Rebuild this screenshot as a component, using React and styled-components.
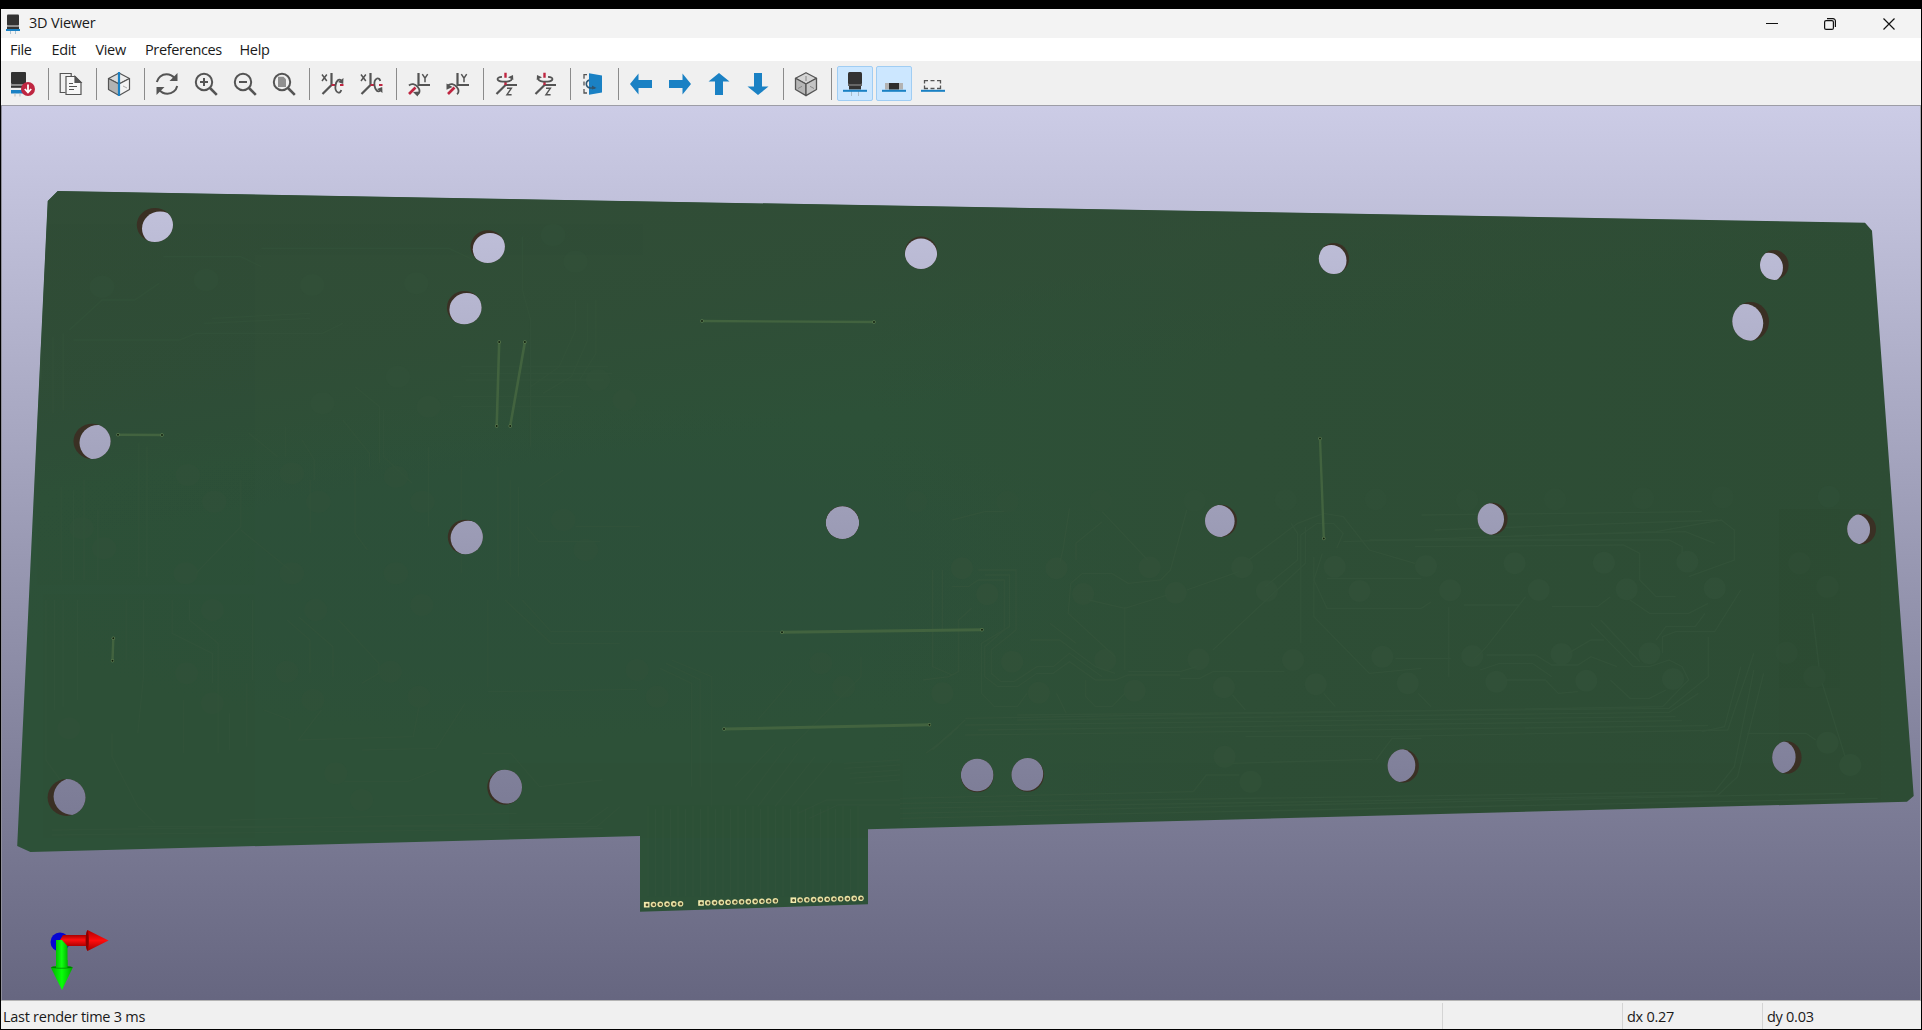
import React from 'react';
import styled, { createGlobalStyle } from 'styled-components';

const GlobalStyle = createGlobalStyle`
  * { box-sizing: border-box; }
  html, body { margin: 0; padding: 0; background: #000; overflow: hidden; }
`;

const Desktop = styled.div`
  width: 1922px;
  height: 1030px;
  padding: 9px 1px 1px 1px;
  background: #000;
  display: flex;
  flex-direction: column;
  font-family: "Open Sans", "Noto Sans", sans-serif;
  font-size: 14.5px;
  color: #1a1a1a;
`;

const Window = styled.div`
  flex: 1;
  display: flex;
  flex-direction: column;
  min-height: 0;
  background: #f0f0f0;
`;

const TitleBar = styled.header`
  height: 29px;
  flex: none;
  display: flex;
  align-items: center;
  background: #f3f3f3;
  padding-left: 5px;
`;

const Title = styled.span`
  margin-left: 9px;
  flex: 1;
  letter-spacing: -0.2px;
  line-height: 20px;
  padding-bottom: 2px;
`;

const WindowButton = styled.button`
  width: 58.5px;
  height: 29px;
  border: 0;
  padding: 0;
  background: transparent;
  display: flex;
  align-items: center;
  justify-content: center;
  & svg { display: block; }
`;

const WindowControls = styled.div`
  display: flex;
  margin-right: 3px;
`;

const MenuBar = styled.nav`
  height: 23px;
  flex: none;
  display: flex;
  align-items: center;
  background: #fff;
  padding: 0 0 0 9px;
`;

const MenuItem = styled.span`
  width: ${(p) => p.$width}px;
  line-height: 20px;
  letter-spacing: -0.35px;
  white-space: nowrap;
`;

const ToolBar = styled.div`
  height: 44px;
  flex: none;
  display: flex;
  align-items: center;
  padding: 1px 0 0 2px;
  background: #f0f0f0;
`;

const ToolButton = styled.button`
  width: 36px;
  height: 35px;
  margin: 0 1px 0 2px;
  padding: 0;
  flex: none;
  display: flex;
  align-items: center;
  justify-content: center;
  border: 1px solid ${(p) => (p.$active ? '#a0cdf3' : 'transparent')};
  border-radius: 2px;
  background: ${(p) => (p.$active ? '#cce7ff' : 'transparent')};
  & svg { display: block; overflow: visible; }
`;

const Separator = styled.span`
  width: 1px;
  height: 32px;
  flex: none;
  margin: 0 ${(p) => (p.$wide ? 3 : 2)}px 0 6px;
  background: #8b8b8b;
`;

const Canvas = styled.main`
  flex: 1;
  min-height: 0;
  border-top: 1px solid #9d9da6;
  border-left: 1px solid #8f8f9b;
  border-right: 1px solid #a6a6ac;
  overflow: hidden;
  & svg { display: block; }
`;

const StatusBar = styled.footer`
  height: 29px;
  flex: none;
  border-top: 1px solid #b4b4b4;
  display: flex;
  align-items: stretch;
  padding-top: 2px;
  background: #f0f0f0;
`;

const StatusField = styled.div`
  width: ${(p) => (p.$width ? `${p.$width}px` : 'auto')};
  flex: ${(p) => (p.$width ? 'none' : 1)};
  padding-left: ${(p) => (p.$width ? 4 : 2)}px;
  border-left: ${(p) => (p.$width ? '1px solid #d4d4d4' : '0')};
  display: flex;
  align-items: center;
  letter-spacing: -0.27px;
  white-space: nowrap;
`;

/* ---------- icons ---------- */

const GREY = '#545454';
const BLUE = '#1a81c4';
const RED = '#bf2641';

const Icon = ({ children, ...rest }) => (
  <svg width="24" height="24" viewBox="0 0 24 24" fill="none" {...rest}>{children}</svg>
);

const AppIcon = () => (
  <svg width="14" height="20" viewBox="0 0 14 20">
    <rect x="1" y="0.5" width="12" height="11" rx="1" fill="#333" />
    <rect x="1" y="11.5" width="12" height="1.4" fill="#888" />
    <rect x="1" y="13" width="12" height="2" fill="#333" />
    <rect x="0" y="15" width="14" height="2" fill={BLUE} />
    <path d="M4.5 17v3M9.5 17v3" stroke="#a9c3d6" />
  </svg>
);

const ReloadBoard = () => (
  <Icon>
    <rect x="0" y="0" width="15" height="12" rx="1" fill="#333" />
    <rect x="0" y="12" width="15" height="1.8" fill="#8c8c8c" />
    <rect x="0" y="13.8" width="14" height="2" fill="#333" />
    <rect x="0" y="18" width="13" height="3.5" fill={BLUE} />
    <path d="M4 21.5v3M9 21.5v3" stroke="#bbb" />
    <circle cx="17" cy="17" r="7" fill={RED} />
    <path d="M17 12.5v7M13.8 17l3.2 3.5 3.2-3.5" stroke="#fff" strokeWidth="1.8" />
  </Icon>
);

const CopyIcon = () => (
  <Icon stroke={GREY} strokeWidth="1.2">
    <path d="M6.5 20.5H1.2V1.5h11v3" />
    <path d="M7 4.5h9l6 6v12H7z" fill="#f7f7f7" />
    <path d="M16 4.5v6h6z" fill={GREY} />
    <path d="M10 11.5h4M10 14.5h8M10 17.5h5" />
  </Icon>
);

const RayCube = () => (
  <Icon stroke={GREY} strokeWidth="1.2" strokeLinejoin="round">
    <path d="M12 1L1.5 6.5 12 12z" fill="#dcdcdc" />
    <path d="M12 1l10.5 5.5L12 12z" fill="#eee" />
    <path d="M1.5 6.5L12 12v11.5L1.5 17.5z" fill="#b3b3b3" />
    <path d="M22.5 6.5L12 12v11.5l10.5-6z" fill="#f4f4f4" />
    <path d="M16 14l4 2" stroke="#aaa" strokeWidth="1" />
    <path d="M12 0v24" stroke={BLUE} strokeWidth="2.2" />
  </Icon>
);

const RefreshIcon = () => (
  <Icon stroke={GREY} strokeWidth="2">
    <path d="M1.800 10C2.800 5.500 6.800 2.200 11.500 2.200c3.500 0 6.400 1.600 8.300 4.200" />
    <path d="M22.200 14c-1 4.500-5 7.800-9.700 7.800-3.500 0-6.400-1.600-8.300-4.200" />
    <path d="M22.500 1v8h-8z" fill={GREY} stroke="none" />
    <path d="M1.500 23v-8h8z" fill={GREY} stroke="none" />
  </Icon>
);

const Magnifier = ({ children }) => (
  <Icon stroke={GREY} strokeWidth="2">
    <circle cx="10" cy="10" r="8.200" />
    <path d="M16 16l6.800 6.800" strokeWidth="2.600" />
    {children}
  </Icon>
);

const AxisX = ({ flip }) => (
  <Icon stroke={GREY} strokeWidth="2.200">
    <path d="M11.500 1v12L2.500 22" />
    <path d="M11.500 13H16M20 13h3.500" stroke={RED} />
    <g transform={flip ? 'matrix(1 0 0 -1 1 27)' : 'translate(1 0)'}>
      <path d="M17 20.500c-2.200-1-3-4-2.400-7.500.7-4.500 3.500-6.800 5.400-4.500" strokeWidth="1.800" />
      <path d="M22.500 6l-.3 6-5.200-2z" fill={GREY} stroke="none" />
      <path d="M17 20.500c1.500.5 2.700-.5 3.300-2.500" strokeWidth="1.800" />
    </g>
    <path d="M2 2.500l4.800 6.500M6.800 2.500L2 9" strokeWidth="1.500" />
  </Icon>
);

const AxisY = ({ flip }) => (
  <Icon stroke={GREY} strokeWidth="2.200">
    <path d="M11.500 1v12h11.500" />
    <path d="M8.500 15.500L2 22" stroke={RED} strokeWidth="2.600" />
    <path d="M2 13.500c2.500-2.500 6-1.500 8.700 1.300 2.300 2.700 2.500 6 .3 7.400" strokeWidth="1.800" />
    {flip
      ? <path d="M.5 11.500v6.300l6-2.800z" fill={GREY} stroke="none" />
      : <path d="M6 20l7-.5-2.500 5z" fill={GREY} stroke="none" />}
    <path d="M15.300 2.200l2.700 4L20.700 2.200M18 6.200v4" strokeWidth="1.500" />
  </Icon>
);

const AxisZ = ({ flip }) => (
  <Icon stroke={GREY} strokeWidth="2.200">
    <path d="M23 13H11.500L2.500 22" />
    <path d="M11.500 .8v5M11.500 9v4" stroke={RED} strokeWidth="2.400" />
    <g transform={flip ? 'matrix(-1 0 0 1 22.500 0)' : 'translate(.5 0)'}>
      <path d="M7.500 4.800C1.500 5.200 1.500 9 8 9.600c5.500.4 9.500-.9 9.200-2.900" strokeWidth="1.800" />
      <path d="M18.500 3l.3 5-5.300-2.800z" fill={GREY} stroke="none" />
    </g>
    <path d="M13 16.300h4.300L13 22.700h4.600" strokeWidth="1.500" />
  </Icon>
);

const FlipIcon = () => (
  <Icon>
    <path d="M6 2.700H3v4M3 9.500v4M3 17v4h3" stroke={GREY} strokeWidth="1.300" />
    <path d="M8 1.200l13 2.300v17L8 22.800z" fill={BLUE} />
    <path d="M8 8c-4 2-3.500 7 1 8h5" stroke="#31556f" strokeWidth="1.500" />
    <path d="M11 13.500l4.500 2.500-4.500 1.500z" fill="#31556f" />
  </Icon>
);

const ArrowIcon = ({ angle }) => (
  <Icon>
    <path
      transform={`rotate(${angle} 12 12)`}
      d="M1 12L9.500 1.500V8H23v8H9.500v6.500z"
      fill={BLUE}
    />
  </Icon>
);

const OrthoCube = () => (
  <Icon stroke={GREY} strokeWidth="1.300" strokeLinejoin="round">
    <path d="M12 .7L1.500 6.300 12 12l10.500-5.700z" fill="#d5d5d5" />
    <path d="M1.500 6.300L12 12v11.600L1.500 17.500z" fill="#b5b5b5" />
    <path d="M22.500 6.300L12 12v11.600l10.500-6.100z" fill="#c5c5c5" />
    <path d="M12 4v5M4 16.500l4-2.200M20 16.500l-4-2.200" stroke="#888" strokeWidth="1" />
  </Icon>
);

const ThroughHole = () => (
  <Icon>
    <path d="M8.500 18v6M15.500 18v6" stroke="#a9bccb" />
    <rect x="5" y="0" width="14" height="12.500" rx="1.500" fill="#333" />
    <rect x="5" y="12" width="14" height="2" fill="#666" />
    <rect x="6" y="14" width="12" height="3.500" fill="#333" />
    <rect x="0" y="17.800" width="24" height="2" fill={BLUE} />
  </Icon>
);

const SmdIcon = () => (
  <Icon>
    <rect x="3" y="11" width="18" height="6.500" fill="#b3b3b3" />
    <rect x="7" y="11" width="10" height="6.500" fill="#2e2e2e" />
    <rect x="0" y="17.800" width="24" height="2" fill={BLUE} />
  </Icon>
);

const VirtualIcon = () => (
  <Icon>
    <path
      d="M3.500 11.500V8.700H7M9.500 8.700h4M16 8.700h3.500v2.800M19.500 13.500v3H16M13.500 16.500h-4M7 16.500H3.500v-3"
      stroke={GREY}
      strokeWidth="1.300"
    />
    <rect x="0" y="17.800" width="24" height="2" fill={BLUE} />
  </Icon>
);

const TOOL_GROUPS = [
  [<ReloadBoard />],
  [<CopyIcon />],
  [<RayCube />],
  [
    <RefreshIcon />,
    <Magnifier><path d="M10 6v8M6 10h8" /></Magnifier>,
    <Magnifier><path d="M6 10h8" /></Magnifier>,
    <Magnifier><path d="M6 4.800h5.500L14 7.300V15H6z" fill="#8f8f8f" stroke="none" /></Magnifier>,
  ],
  [<AxisX />, <AxisX flip />],
  [<AxisY />, <AxisY flip />],
  [<AxisZ />, <AxisZ flip />],
  [<FlipIcon />],
  [<ArrowIcon angle={0} />, <ArrowIcon angle={180} />, <ArrowIcon angle={90} />, <ArrowIcon angle={270} />],
  [<OrthoCube />],
];

const TOGGLES = [
  { icon: <ThroughHole />, active: true },
  { icon: <SmdIcon />, active: true },
  { icon: <VirtualIcon />, active: false },
];

/* ---------- board ---------- */

/* left, right, top, bottom of the drill, then the shift of its far rim */
const HOLES = [
  [136.8, 173, 208, 242, 5.2, 3.5],
  [470.6, 504.9, 230.3, 263, 2.2, 2.7],
  [446.9, 481.6, 291, 324.3, 2.5, 2],
  [73.5, 110.6, 423.7, 459, 6, 1.3],
  [447.8, 482.9, 519.7, 554.3, 2.8, 1],
  [904.8, 937.2, 236.5, 269, 0, 2],
  [1318.8, 1349, 243, 274, -2.5, 2],
  [1760, 1788.6, 250, 280, -5.7, 2.7],
  [1732.3, 1769, 302, 340.7, -5.8, 2],
  [825.7, 859.2, 506, 539, 0, 0.3],
  [1205, 1237, 504.7, 537, -2.4, 0.3],
  [1477.6, 1507.6, 502.7, 534.7, -3.6, 0.5],
  [1847.2, 1876, 513.7, 544.3, -6, 0.5],
  [960.8, 993.6, 758.7, 792.3, 0, -1],
  [1011.5, 1044, 758, 791.7, -0.8, -1],
  [1387.6, 1418.9, 749.3, 782.7, -3.6, -0.7],
  [1772.2, 1801.6, 741.3, 773.7, -6, -0.5],
  [47.6, 85.5, 779, 816, 6, -1],
  [487.3, 522, 769.7, 804.7, 2, -1.2],
];

const JUMPERS = [
  [702, 321, 874, 322, 2.4],
  [499.2, 342, 496.7, 426, 2.6],
  [524.9, 342, 510.2, 426, 2.6],
  [118, 434.7, 162, 435, 2.6],
  [1320, 438.5, 1323.8, 538.5, 2.4],
  [782, 632.3, 982, 629.7, 3],
  [724, 729, 929.5, 724.8, 3],
  [113.3, 638.3, 112.5, 660.7, 2.4],
];

const PAD_ROWS = [
  { count: 6, x: 646.7, y: 904.7, slope: -0.2 },
  { count: 12, x: 701, y: 903, slope: -0.2 },
  { count: 11, x: 793.3, y: 900.2, slope: -0.2 },
];

const RIGHT_PADS = [
  [95, 265], [240, 265], [383, 262], [525, 262], [667, 260], [807, 258], [943, 250], [1080, 248], [1208, 245],
  [134, 343], [281, 342], [423, 338], [563, 333], [705, 333], [844, 331], [980, 330], [1115, 328], [1250, 325],
  [172, 545], [315, 540], [458, 538], [603, 540], [740, 530], [878, 528], [1015, 522], [1150, 520],
  [65, 640], [213, 638], [360, 632], [497, 622], [638, 613], [779, 610], [915, 605], [1053, 602], [1186, 597],
  [498, 830], [538, 905], [1423, 788], [1458, 855],
];

const RIGHT_DIM_PADS = [
  [25, 65], [165, 65], [308, 62], [452, 62], [592, 60], [730, 58], [870, 60], [1005, 58], [1140, 55], [1262, 52],
  [1380, 250], [1423, 320], [1360, 518], [1403, 590], [1425, 50],
];

const LEFT_TOP_PADS = [
  [250, 320], [505, 300], [765, 315], [1020, 310], [1355, 165], [1410, 245],
  [790, 670], [975, 590], [1050, 680], [1465, 600], [1530, 660],
  [460, 885], [715, 880], [970, 890], [525, 965], [780, 965], [1035, 965],
  [200, 1045], [255, 1105], [455, 1180], [715, 1180], [970, 1180], [1435, 1110], [1380, 1020],
];

const LEFT_BOTTOM_PADS = [
  [325, 220], [500, 215], [680, 215], [370, 310], [545, 300], [730, 290],
  [1110, 210], [1145, 290], [120, 385], [585, 520], [630, 600], [1430, 190], [1470, 260], [735, 15], [370, 30], [550, 30],
];

const RIGHT_TRACES = [
  'M50 270V560L80 585M65 270V450M35 600L75 590L90 575V420L110 385',
  'M80 320H105L120 300H160V450L130 500V590L150 620H180L210 580H235L260 545L300 600H330L350 585H430',
  'M120 270H178V450L140 510V580L155 605H175L210 560H235L260 520L310 590',
  'M130 285H168V440L125 490V640L145 680H180L195 640',
  'M80 120L130 95H160M260 85L250 210L245 250M310 95L380 240M440 90L415 270L400 300L350 310L325 280H280L262 310L258 400L330 530',
  'M270 240V190L310 125M345 380V570M290 360L345 385L410 345M440 330L520 275M535 240L610 130L650 100L680 110L720 210L790 250',
  'M600 130L610 160V240L560 320M622 140V250L480 510M635 230V410L720 580L800 565',
  'M648 220L635 300L655 385H800L815 365M655 295H800M680 185L1160 155L1260 120L1280 150V240L1210 290',
  'M670 205L680 160L665 130H640L615 165V490M720 180L1180 180L1200 200V220M790 200L1110 195L1135 220V300L1160 350H1190',
  'M820 150L1255 120M910 170L1205 155L1250 190M800 105L1230 95',
  'M842 380V590M960 350L900 500L880 540M865 375H950M1000 380H1070L1090 350M1120 360L1150 400H1210L1240 370',
  'M1060 430L1125 560L1150 560L1180 540L1200 560L1210 600L1180 660L1170 680L100 715',
  'M1075 420L1135 545M1025 520L1060 480H1080M1170 520V470L1190 455H1250L1290 330M1160 480L1175 440H1220L1235 400',
  'M180 705L1180 685L1240 590V470M180 720L1180 697L1225 640M100 735L1190 710M120 750L1200 722M100 765L1240 737',
  'M200 480H245L300 560L330 580M230 430L270 490M285 600V650L300 680H325L345 640M240 640L255 700M510 645L530 690M650 640L668 680M795 640L815 680',
  'M350 575H430L455 560M430 595H460L480 575H590M760 535H845M900 525H975L1000 555H1040L1060 530L1100 560M890 570L920 550H970L1000 590',
  'M930 600H990L1010 640L1040 635M1090 600L1120 655H1150L1175 630M530 770H740L1270 750L1310 520M450 935L470 885H520M730 840L755 775H800',
  'M510 850L725 838M1290 560L1265 740L1230 755M1310 570L1280 860L1250 935L0 970M1325 580L1285 890L1255 945L0 985',
  'M1300 760H1390L1405 780M0 1000L1450 940M0 1015L1500 955M1415 610L1450 830M1400 400L1410 560',
  'M0 955L450 935M100 720L60 790M90 740L50 810M80 760L40 820',
];

const LEFT_TOP_TRACES = [
  'M170 450L250 360H330L390 310M180 480H440L480 460H790L840 430M640 205H1100L1160 240M400 230H590L640 260',
  'M1280 170V330L1300 420V800M1410 360V450L1370 560L1300 620M1440 370V480L1400 590L1330 640M1460 360V520L1420 600',
  'M500 430L760 415M520 415L760 400M870 620L930 680V850M940 690V830L1010 910M700 740V830M840 720L905 820V860',
  'M610 760L680 830M740 780L770 840V900M340 790V1190M360 800V1190M590 900V1040L480 1180M590 1050L720 1180',
  'M1130 560H1490M1150 580H1500M1140 600H1480M1110 650H1420M1130 680H1400M1050 800V1040M1130 860V1180M1220 860V1200',
  'M150 920V1200M180 930V1200M206 900V1200M240 990V1200M760 900V1060M870 860V1060L900 1110M1290 1040L1320 1085H1470',
  'M100 500V600M130 470V700M155 460V690M1250 900V1190M1270 920V1190M1380 870L1320 920M1410 1040H1568',
];

const LEFT_BOTTOM_TRACES = [
  'M80 0V480L130 600M95 0V330M110 0V320M135 0V300M220 0V180M250 0V230L240 400M300 0V100L370 160V250M330 0V60L380 130V280',
  'M440 0V240M500 60L540 120V220M520 50L580 140V230M590 60L660 190V220L630 250M850 0V260M880 0L960 130H1080M910 0L960 95H1360',
  'M320 300V460M380 280V460M400 340V450M430 250V440M460 330L505 360V390M560 330L520 420L720 410L730 320M630 450L760 445L810 310',
  'M850 275L1110 268M840 460H890L940 560L1050 540M600 545H710L760 510M195 400V470L240 620L270 670M240 680H1040L1080 620',
  'M90 690L1020 670L1060 620M90 705L1050 685M400 660L900 640M1160 190L1220 240V560M1150 205L1205 250V560M1170 180L1240 230V620',
  'M1380 240L1320 360M1500 170V230L1380 440M1350 430L1280 560M1370 440L1300 600M1390 460L1320 620M1420 470L1350 620M1450 480L1380 620',
  'M1470 490L1568 480M1470 505L1568 495M1480 520L1568 510M1480 535L1568 525M1490 550L1568 540M1390 640L1440 600H1568M1410 655L1460 615H1568',
];

const FAINT_ZONES = [
  { transform: 'translate(900 480) scale(.65178 .33333)', pads: RIGHT_PADS, traces: RIGHT_TRACES, rx: 17, opacity: 0.6 },
  { transform: 'translate(900 480) scale(.65178 .33333)', pads: RIGHT_DIM_PADS, traces: [], rx: 17, opacity: 0.3 },
  { transform: 'translate(0 180) scale(.40816 .33333)', pads: LEFT_TOP_PADS, traces: LEFT_TOP_TRACES, rx: 30, opacity: 0.4 },
  { transform: 'translate(0 600) scale(.57398 .33333)', pads: LEFT_BOTTOM_PADS, traces: LEFT_BOTTOM_TRACES, rx: 20, opacity: 0.4 },
];

const BOARD =
  'M57.700 191L1865 222.700L1872 230.700L1913.700 796L1907 801.700L868 829.300V904.300L640 911.700V836L30.400 852L17.200 846L47.700 201Z';

const Hole = ({ box, index }) => {
  const [l, r, t, b, dx, dy] = box;
  const cx = (l + r) / 2;
  const cy = (t + b) / 2;
  const rx = (r - l) / 2;
  const ry = (b - t) / 2;
  return (
    <g>
      <clipPath id={`drill${index}`}><ellipse cx={cx} cy={cy} rx={rx} ry={ry} /></clipPath>
      <ellipse cx={cx} cy={cy} rx={rx} ry={ry} fill="#3a3024" />
      <ellipse cx={cx + dx} cy={cy + dy} rx={rx} ry={ry} fill="url(#sky)" clipPath={`url(#drill${index})`} />
    </g>
  );
};

const PadRow = ({ row }) => (
  <g>
    {Array.from({ length: row.count }, (_, i) => {
      const x = row.x + i * 6.76;
      const y = row.y + i * row.slope;
      return (
        <g key={i}>
          {i === 0
            ? <rect x={x - 2.8} y={y - 2.8} width="5.6" height="5.6" fill="#f1e9ac" />
            : <circle cx={x} cy={y} r="2.8" fill="#e8dfa2" />}
          <circle cx={x + 0.3} cy={y + 0.2} r="1.4" fill="#4c4a2a" />
        </g>
      );
    })}
  </g>
);

const AxisGizmo = () => (
  <g>
    <circle cx="60" cy="942" r="9.500" fill="#0505d2" />
    <path d="M60 940l3-5h26v11H66z" fill="url(#redShaft)" />
    <path d="M87.500 930c-2.500 3-2.500 18 0 21l21-10.500z" fill="url(#redCone)" />
    <path d="M87.500 930c-2.500 3-2.500 18 0 21 1.800-5 1.800-16 0-21z" fill="#8a0000" />
    <path d="M56 940h6l5.500 6v22H56z" fill="url(#greenShaft)" />
    <path d="M50.800 967.500c3-2.300 19-2.300 22 0L62 990z" fill="url(#greenCone)" />
    <path d="M50.800 967.500c3-2 19-2 22 0-4 1.300-18 1.300-22 0z" fill="#007a00" />
    <path d="M56 960h11.500v7.800H56z" fill="url(#greenShaft)" />
  </g>
);

const Scene = () => (
  <svg width="1918" height="894" viewBox="2 106 1918 894">
    <defs>
      <linearGradient id="sky" gradientUnits="userSpaceOnUse" x1="0" y1="106" x2="0" y2="1000">
        <stop offset="0" stopColor="#cccce6" />
        <stop offset="1" stopColor="#666680" />
      </linearGradient>
      <linearGradient id="mask" gradientUnits="userSpaceOnUse" x1="20" y1="0" x2="1910" y2="0">
        <stop offset="0" stopColor="#2d5138" />
        <stop offset="0.45" stopColor="#2d5138" />
        <stop offset="0.65" stopColor="#2e4e36" />
        <stop offset="1" stopColor="#2d4c34" />
      </linearGradient>
      <linearGradient id="topShade" gradientUnits="userSpaceOnUse" x1="600" y1="190" x2="640" y2="450">
        <stop offset="0" stopColor="#314c36" stopOpacity="0.85" />
        <stop offset="0.5" stopColor="#314c36" stopOpacity="0.6" />
        <stop offset="1" stopColor="#314c36" stopOpacity="0" />
      </linearGradient>
      <radialGradient id="sheen">
        <stop offset="0" stopColor="#2c4f3a" stopOpacity="0.7" />
        <stop offset="0.6" stopColor="#2c4f3a" stopOpacity="0.5" />
        <stop offset="1" stopColor="#2c4f3a" stopOpacity="0" />
      </radialGradient>
      <linearGradient id="redShaft" x1="0" y1="0" x2="0" y2="1">
        <stop offset="0" stopColor="#a80000" /><stop offset="0.45" stopColor="#ff1010" /><stop offset="1" stopColor="#b00000" />
      </linearGradient>
      <linearGradient id="redCone" x1="0" y1="0" x2="0" y2="1">
        <stop offset="0" stopColor="#b00000" /><stop offset="0.5" stopColor="#ff0c0c" /><stop offset="1" stopColor="#a00000" />
      </linearGradient>
      <linearGradient id="greenShaft" x1="0" y1="0" x2="1" y2="0">
        <stop offset="0" stopColor="#00c400" /><stop offset="0.5" stopColor="#10ff10" /><stop offset="1" stopColor="#00b400" />
      </linearGradient>
      <linearGradient id="greenCone" x1="0" y1="0" x2="1" y2="0">
        <stop offset="0" stopColor="#00b000" /><stop offset="0.5" stopColor="#08ff08" /><stop offset="1" stopColor="#00a800" />
      </linearGradient>
      <clipPath id="outline"><path d={BOARD} /></clipPath>
    </defs>

    <rect x="0" y="106" width="1922" height="894" fill="url(#sky)" />
    <path d={BOARD} fill="url(#mask)" />

    <g clipPath="url(#outline)">
      <path d={BOARD} fill="url(#topShade)" />
      <ellipse cx="560" cy="570" rx="580" ry="170" fill="url(#sheen)" />
      {FAINT_ZONES.map((zone, z) => (
        <g key={z} transform={zone.transform} opacity={zone.opacity}>
          {zone.pads.map(([x, y], i) => (
            <ellipse key={i} cx={x} cy={y} rx={zone.rx} ry="33" fill="#33523a" />
          ))}
          {zone.traces.map((d, i) => (
            <path key={i} d={d} fill="none" stroke="#36553c" strokeWidth="1.300" vectorEffect="non-scaling-stroke" />
          ))}
        </g>
      ))}
      <g stroke="#35553c" strokeWidth="1" opacity="0.5">
        {Array.from({ length: 29 }, (_, i) => (
          <path key={i} d={`M${648 + i * 7.5} ${806 + (i % 2) * 3}V896`} />
        ))}
      </g>
    </g>

    {JUMPERS.map(([x1, y1, x2, y2, w], i) => (
      <g key={i}>
        <path d={`M${x1} ${y1}L${x2} ${y2}`} stroke="#42633f" strokeWidth={w} />
        <circle cx={x1} cy={y1} r="1.700" fill="#5d7c50" />
        <circle cx={x2} cy={y2} r="1.700" fill="#5d7c50" />
        <circle cx={x1} cy={y1} r="1" fill="#10200f" />
        <circle cx={x2} cy={y2} r="1" fill="#10200f" />
      </g>
    ))}
    {HOLES.map((box, i) => <Hole key={i} box={box} index={i} />)}
    {PAD_ROWS.map((row, i) => <PadRow key={i} row={row} />)}
    <AxisGizmo />
  </svg>
);

export default function App() {
  return (
    <Desktop>
      <GlobalStyle />
      <Window>
        <TitleBar>
          <AppIcon />
          <Title>3D Viewer</Title>
          <WindowControls>
            <WindowButton aria-label="Minimize">
              <svg width="12" height="12"><path d="M0 5.500h12" stroke="#111" /></svg>
            </WindowButton>
            <WindowButton aria-label="Restore">
              <svg width="12" height="12" fill="none" stroke="#111" strokeWidth="1.200">
                <rect x="0.600" y="2.600" width="8.800" height="8.800" rx="1.500" />
                <path d="M3 .6h6A2.400 2.400 0 0 1 11.400 3v6" />
              </svg>
            </WindowButton>
            <WindowButton aria-label="Close">
              <svg width="12" height="12"><path d="M.5.5l11 11M11.500.5l-11 11" stroke="#111" strokeWidth="1.200" /></svg>
            </WindowButton>
          </WindowControls>
        </TitleBar>

        <MenuBar>
          <MenuItem $width={41.5}>File</MenuItem>
          <MenuItem $width={44}>Edit</MenuItem>
          <MenuItem $width={49.5}>View</MenuItem>
          <MenuItem $width={94.5}>Preferences</MenuItem>
          <MenuItem $width={50}>Help</MenuItem>
        </MenuBar>

        <ToolBar>
          {TOOL_GROUPS.map((group, g) => (
            <React.Fragment key={g}>
              {group.map((icon, i) => <ToolButton key={i}>{icon}</ToolButton>)}
              <Separator $wide={g === TOOL_GROUPS.length - 1} />
            </React.Fragment>
          ))}
          {TOGGLES.map((t, i) => <ToolButton key={i} $active={t.active}>{t.icon}</ToolButton>)}
        </ToolBar>

        <Canvas><Scene /></Canvas>

        <StatusBar>
          <StatusField>Last render time 3 ms</StatusField>
          <StatusField $width={180} />
          <StatusField $width={140}>dx 0.27</StatusField>
          <StatusField $width={159}>dy 0.03</StatusField>
        </StatusBar>
      </Window>
    </Desktop>
  );
}
